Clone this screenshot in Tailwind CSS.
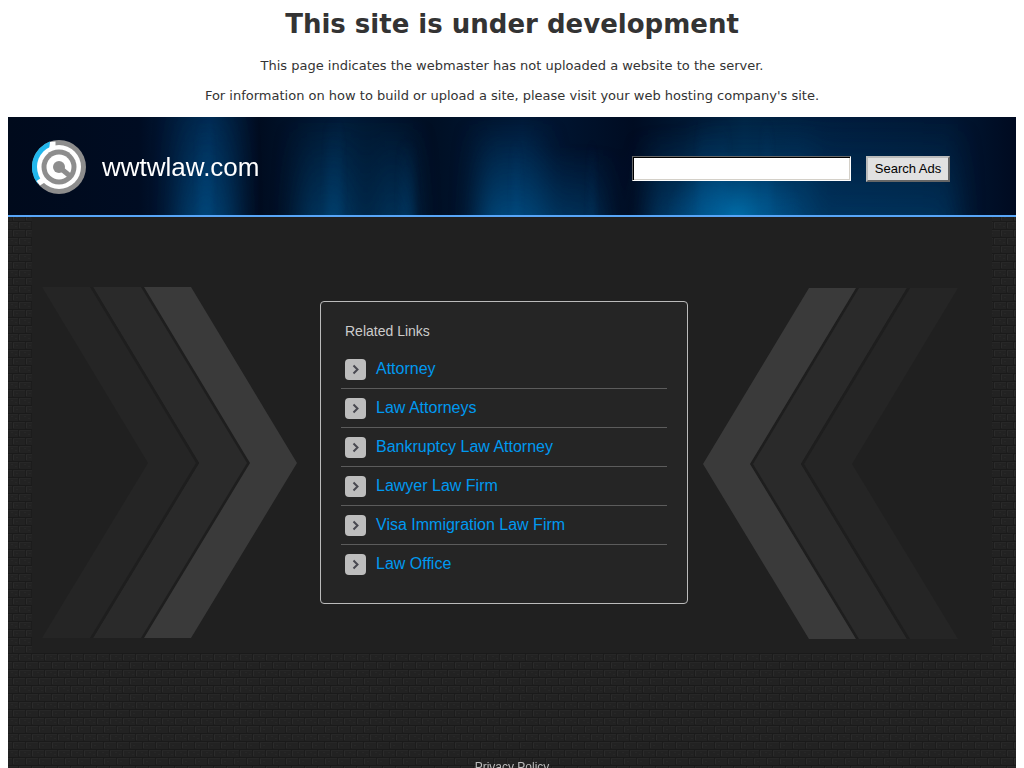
<!doctype html>
<html lang="en">
<head>
  <meta charset="UTF-8">
  <meta name="viewport" content="width=device-width, initial-scale=1.0">
  <title>wwtwlaw.com</title>
  <script src="https://cdn.jsdelivr.net/npm/@tailwindcss/browser@4"></script>
</head>
<body class="bg-white px-2 font-['Liberation_Sans',Arial,sans-serif]">
  <section id="notice" class="pt-2 text-center text-[#333] font-['DejaVu_Sans',Verdana,sans-serif]">
    <h1 class="text-[26px] leading-8 font-bold">This site is under development</h1>
    <p class="mt-[18px] text-[13px] leading-4">This page indicates the webmaster has not uploaded a website to the server.</p>
    <p class="mt-[14px] text-[13px] leading-4">For information on how to build or upload a site, please visit your web hosting company's site.</p>
  </section>

  <header class="relative mt-[13px] h-[100px] border-b-2 border-[#58a6f8] bg-[#000b20] overflow-hidden">
    <!-- light streaks -->
    <svg class="absolute inset-0 w-full h-full" viewBox="0 0 1008 98" preserveAspectRatio="none" aria-hidden="true">
      <defs>
        <linearGradient id="base" x1="0" x2="1" y1="0" y2="0">
          <stop offset="0" stop-color="#000a1c"/>
          <stop offset=".13" stop-color="#000c22"/>
          <stop offset=".2" stop-color="#01264c"/>
          <stop offset=".25" stop-color="#000c20"/>
          <stop offset=".33" stop-color="#001c38"/>
          <stop offset=".42" stop-color="#000f24"/>
          <stop offset=".51" stop-color="#001836"/>
          <stop offset=".62" stop-color="#000c22"/>
          <stop offset=".73" stop-color="#002444"/>
          <stop offset=".83" stop-color="#001c3c"/>
          <stop offset=".93" stop-color="#001834"/>
          <stop offset="1" stop-color="#000a20"/>
        </linearGradient>
        <linearGradient id="rise" x1="0" x2="0" y1="0" y2="1">
          <stop offset="0" stop-color="#005c98" stop-opacity="0"/>
          <stop offset="1" stop-color="#005c98"/>
        </linearGradient>
        <radialGradient id="glow">
          <stop offset="0" stop-color="#0080c0"/>
          <stop offset="1" stop-color="#0060a0" stop-opacity="0"/>
        </radialGradient>
        <filter id="smear" x="-10%" width="120%" y="-10%" height="120%">
          <feGaussianBlur stdDeviation="13 3"/>
        </filter>
        <filter id="fine" x="-10%" width="120%">
          <feGaussianBlur stdDeviation="3 0"/>
        </filter>
      </defs>
      <rect width="1008" height="98" fill="url(#base)"/>
      <g fill="url(#rise)" filter="url(#smear)">
        <rect x="170" y="-30" width="56" height="140" opacity=".5"/>
        <rect x="290" y="0" width="60" height="110" opacity=".45"/>
        <rect x="365" y="0" width="40" height="110" opacity=".45"/>
        <rect x="470" y="0" width="65" height="110" opacity=".75"/>
        <rect x="535" y="30" width="60" height="80" opacity=".45"/>
        <rect x="640" y="10" width="60" height="100" opacity=".55"/>
        <rect x="690" y="0" width="110" height="110" opacity=".6"/>
        <rect x="790" y="0" width="160" height="110" opacity=".38"/>
      </g>
      <ellipse cx="727" cy="104" rx="70" ry="70" fill="url(#glow)" opacity=".75"/>
      <g fill="url(#rise)" filter="url(#fine)" opacity=".22">
        <rect x="190" width="14" height="98"/>
        <rect x="318" width="16" height="98"/>
        <rect x="392" y="20" width="15" height="78"/>
        <rect x="505" y="20" width="6" height="78"/>
        <rect x="582" y="20" width="4" height="78"/>
        <rect x="690" width="30" height="98"/>
        <rect x="755" width="8" height="98"/>
      </g>
    </svg>

    <div class="relative flex h-full items-center justify-between pt-[2px] pl-6 pr-[66px]">
      <div class="flex items-center gap-4">
        <svg class="size-[54px]" viewBox="0 0 54 54" aria-hidden="true">
          <circle cx="27" cy="27" r="27" fill="#8d8d8d"/>
          <path d="M27 27L5.500 43.500A27 27 0 0 1 18 1.600Z" fill="#22b7ec"/>
          <circle cx="27" cy="27" r="22" fill="#fff"/>
          <path d="M18 2L23.500 1.500V10H17Z" fill="#fff"/>
          <path d="M4.500 41L12 36L15 41L8 45.500Z" fill="#fff"/>
          <circle cx="27" cy="27" r="17.500" fill="#8d8d8d"/>
          <circle cx="27" cy="27" r="12.500" fill="#fff"/>
          <circle cx="27" cy="27" r="6" fill="#8d8d8d"/>
          <path d="M27 27L38 36" stroke="#8d8d8d" stroke-width="5"/>
        </svg>
        <span class="text-[26px] leading-8 text-white">wwtwlaw.com</span>
      </div>
      <form class="flex items-start gap-[15px] pt-1">
        <input id="search" type="text" aria-label="Search" class="h-[25px] w-[219px] border border-t-[#666] border-l-[#666] border-b-white border-r-white bg-white px-1 text-[13px] shadow-[inset_1px_1px_0_#000,inset_-1px_-1px_0_#d4d0c8]">
        <button type="button" class="h-[26px] w-[84px] whitespace-nowrap border-2 border-t-[#bbb] border-l-[#bbb] border-b-[#666] border-r-[#666] bg-[#e1e1e1] text-[13px] leading-5 text-black">Search Ads</button>
      </form>
    </div>
  </header>

  <main class="relative bg-[#202020]">
    <!-- brick wall -->
    <svg class="absolute inset-0 w-full h-full" aria-hidden="true">
      <defs>
        <pattern id="bricks" width="13" height="16" y="4" patternUnits="userSpaceOnUse">
          <rect width="13" height="16" fill="#222"/>
          <path d="M0 .5H13M0 8.500H13" stroke="#1a1a1a"/>
          <path d="M0 1.500H13M0 9.500H13" stroke="#272727"/>
          <path d="M10.500 1V8M4.500 9V16" stroke="#1c1c1c"/>
          <path d="M11.500 2V7M5.500 10V15" stroke="#2b2b2b"/>
          <path d="M3 3.500H5M7 5.500H9M8 12.500H10" stroke="#272727"/>
        </pattern>
      </defs>
      <rect width="100%" height="100%" fill="url(#bricks)"/>
    </svg>

    <div class="relative mx-auto flex max-w-[960px] items-start bg-[#202020] pt-[70px] pl-[10px] pb-[14px]">
      <svg class="mr-[22px] h-[351px] w-64 shrink-0" viewBox="0 0 256 351" aria-hidden="true">
        <g id="chevrons">
          <path d="M0 0H49L155 176L49 351H0L106 176Z" fill="#252525"/>
          <path d="M51 0H100L206 176L100 351H51L157 176Z" fill="#2a2a2a"/>
          <path d="M48 0H51L157 176L51 351H48L154 176ZM99 0H102L208 176L102 351H99L205 176Z" fill="#1e1e1e"/>
          <path d="M102 0H149L255 176L149 351H102L208 176Z" fill="#3a3a3a"/>
        </g>
      </svg>

      <section id="related" class="mt-[14px] w-[368px] shrink-0 rounded border border-[#bbb] bg-[#252525] px-5 pt-[19px] pb-5">
        <h2 class="px-1 text-[14px] leading-5 text-[#ccc]">Related Links</h2>
        <ul id="link-list" class="mt-[9px] text-[16px] leading-5 text-[#0099f0]"></ul>
      </section>

      <svg class="mt-px ml-[14px] h-[351px] w-64 shrink-0 -scale-x-100" viewBox="0 0 256 351" aria-hidden="true">
        <use href="#chevrons"/>
      </svg>
    </div>

    <footer class="relative pt-[106px] pb-4 text-center text-[12px] leading-4">
      <a href="#" class="text-[#bbb]">Privacy Policy</a>
    </footer>
  </main>
</body>

<script>
  const links = [
    "Attorney",
    "Law Attorneys",
    "Bankruptcy Law Attorney",
    "Lawyer Law Firm",
    "Visa Immigration Law Firm",
    "Law Office"
  ];

  const linkList = document.getElementById("link-list");

  links.forEach(name => {
    const item = document.createElement("li");
    item.className = "border-b border-[#5c5c5c] last:border-b-0";
    item.innerHTML = `
      <a href="#" class="flex h-[38px] items-center gap-[10px] px-1">
        <svg class="size-[21px]" viewBox="0 0 21 21" aria-hidden="true">
          <rect width="21" height="21" rx="4" fill="#bdbdbd"/>
          <path d="M8.500 6.500L12.500 10.500L8.500 14.500" fill="none" stroke="#484850" stroke-width="2"/>
        </svg>
        <span>${name}</span>
      </a>`;
    linkList.appendChild(item);
  });
</script>
</html>
